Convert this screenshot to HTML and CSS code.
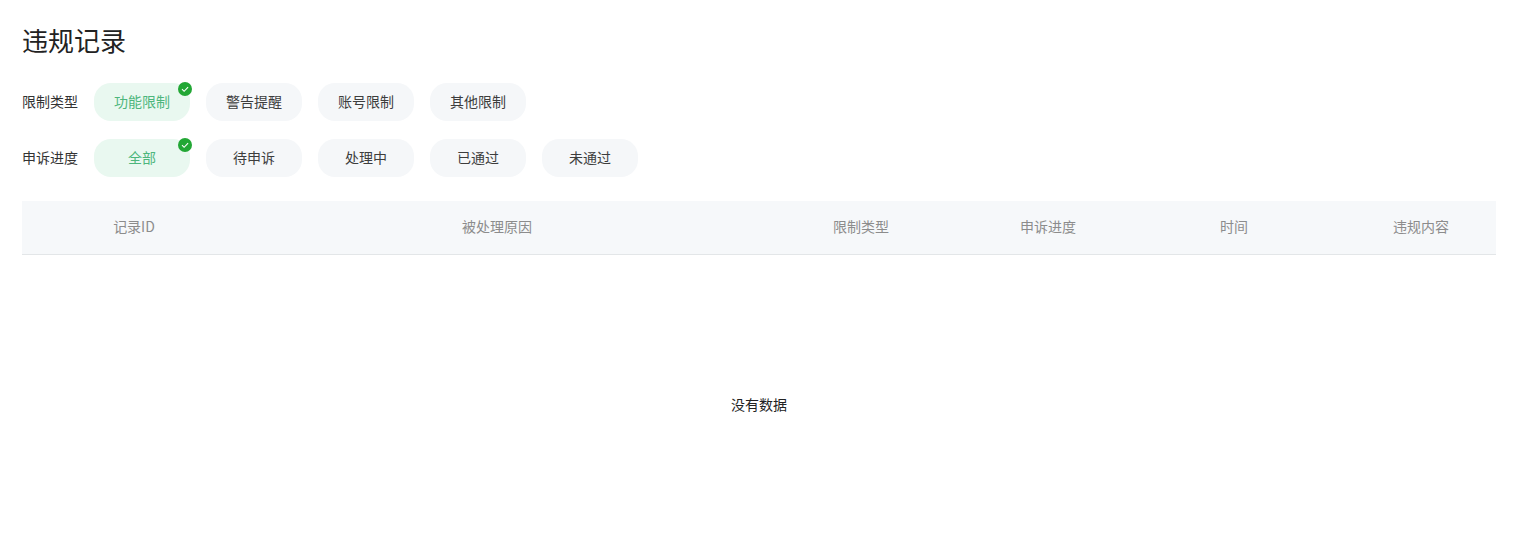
FILE: index.html
```html
<!DOCTYPE html>
<html lang="zh-CN">
<head>
    <meta charset="UTF-8">
    <title>违规记录</title>
    <link rel="stylesheet" href="styles.css">
</head>
<body>
    <h1 class="page-title">违规记录</h1>

    <div class="filter-row">
        <span class="filter-label">限制类型</span>
        <a class="pill pill--active">功能限制
            <svg class="pill-check" viewBox="0 0 14 14"><circle cx="7" cy="7" r="7" fill="#22a735"/><path d="M4 7.2l2.1 2.1L10.1 5.2" fill="none" stroke="#fff" stroke-width="1.1"/></svg>
        </a>
        <a class="pill">警告提醒</a>
        <a class="pill">账号限制</a>
        <a class="pill">其他限制</a>
    </div>

    <div class="filter-row">
        <span class="filter-label">申诉进度</span>
        <a class="pill pill--active">全部
            <svg class="pill-check" viewBox="0 0 14 14"><circle cx="7" cy="7" r="7" fill="#22a735"/><path d="M4 7.2l2.1 2.1L10.1 5.2" fill="none" stroke="#fff" stroke-width="1.1"/></svg>
        </a>
        <a class="pill">待申诉</a>
        <a class="pill">处理中</a>
        <a class="pill">已通过</a>
        <a class="pill">未通过</a>
    </div>

    <div class="record-table">
        <div class="table-head">
            <div class="col-id">记录ID</div>
            <div class="col-reason">被处理原因</div>
            <div class="col-type">限制类型</div>
            <div class="col-progress">申诉进度</div>
            <div class="col-time">时间</div>
            <div class="col-content">违规内容</div>
        </div>
        <div class="table-empty">没有数据</div>
    </div>
</body>
</html>
```

FILE: styles.css
```css
body {
    margin: 0;
    padding: 0 38px 0 22px;
    background-color: #fff;
    font-family: "Noto Sans CJK SC", "Liberation Sans", sans-serif;
    font-size: 14px;
    color: #333;
}

.page-title {
    margin: 0;
    padding-top: 22px;
    height: 83px;
    box-sizing: border-box;
    font-size: 26px;
    line-height: 36px;
    font-weight: 400;
    color: #222;
}

.filter-row {
    display: flex;
    align-items: center;
    gap: 16px;
    margin-bottom: 18px;
}

.filter-label {
    width: 56px;
    white-space: nowrap;
    padding-bottom: 2px;
}

.pill {
    position: relative;
    width: 96px;
    height: 38px;
    box-sizing: border-box;
    padding-bottom: 2px;
    display: flex;
    align-items: center;
    justify-content: center;
    background-color: #f5f7f9;
    border-radius: 17px;
    color: #3d3d3d;
}

.pill--active {
    background-color: #e9f8f0;
    color: #4db67c;
}

.pill-check {
    position: absolute;
    top: -1px;
    right: -2px;
    width: 14px;
    height: 14px;
}

.record-table {
    margin-top: 24px;
}

.table-head {
    display: grid;
    grid-template-columns: 224px 502px 226px 148px 224px 150px;
    height: 54px;
    box-sizing: border-box;
    padding-bottom: 4px;
    align-items: center;
    text-align: center;
    background-color: #f6f8fa;
    border-bottom: 1px solid #e3e6e8;
    color: #8c8c8c;
}

.table-empty {
    margin-top: 138px;
    line-height: 22px;
    text-align: center;
    color: #222;
}
```
